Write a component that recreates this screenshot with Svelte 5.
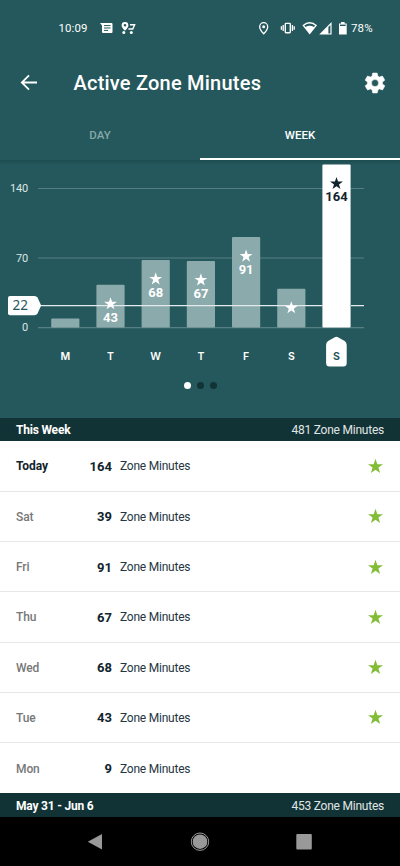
<script>
  const star = 'M0-6.3 1.5-1.9H6.2L2.4.9 3.8 5.4 0 2.7-3.8 5.4-2.4.9-6.2-1.9H-1.5Z'

  const days = [
    { label: 'M', value: 9 },
    { label: 'T', value: 43, goal: true, count: true },
    { label: 'W', value: 68, goal: true, count: true },
    { label: 'T', value: 67, goal: true, count: true },
    { label: 'F', value: 91, goal: true, count: true },
    { label: 'S', value: 39, goal: true },
    { label: 'S', value: 164, goal: true, count: true, today: true },
  ]

  const rows = [
    { day: 'Today', value: 164 },
    { day: 'Sat', value: 39 },
    { day: 'Fri', value: 91 },
    { day: 'Thu', value: 67 },
    { day: 'Wed', value: 68 },
    { day: 'Tue', value: 43 },
    { day: 'Mon', value: 9 },
  ]

  const goal = 22
  const base = 167.5
  const y = (v) => base - v * 0.994
  const x = (i) => 65.3 + i * 45.2
</script>

<div class="screen">
  <div class="status">
    <span class="clock">10:09</span>
    <svg class="status-icons" width="300" height="20" viewBox="100 18 300 20" fill="#fff">
      <path d="M100 23H111.5Q112.5 23 112.5 24V32Q112.5 33 111.5 33H103Q102 33 102 32V25.5Z" />
      <path d="M104 25.6H110.5M104 28H110.5M104 30.4H108" stroke="#25585c" stroke-width="1" />
      <path fill-rule="evenodd" d="M125 22A3.4 3.4 0 0 0 121.6 25.4C121.6 27.5 125 30.6 125 30.6S128.4 27.5 128.4 25.4A3.4 3.4 0 0 0 125 22ZM125 24A1.3 1.3 0 1 1 125 26.6A1.3 1.3 0 0 1 125 24Z" />
      <circle cx="123.8" cy="32.4" r="1.5" />
      <circle cx="131.3" cy="32.4" r="1.5" />
      <path d="M130 24.8H134.6L132.8 29H128.4" fill="none" stroke="#fff" stroke-width="1.4" />
      <path d="M263.7 22.7A4 4 0 0 0 259.7 26.7C259.7 29.7 263.7 33.8 263.7 33.8S267.7 29.7 267.7 26.7A4 4 0 0 0 263.7 22.7Z" fill="none" stroke="#fff" stroke-width="1.3" />
      <circle cx="263.7" cy="26.7" r="1.5" />
      <rect x="285.3" y="23.4" width="5" height="9.4" rx=".7" fill="none" stroke="#fff" stroke-width="1.4" />
      <path d="M283.2 25V31M281.4 26.3V29.8M292.4 25V31M294.2 26.3V29.8" stroke="#fff" stroke-width="1.3" />
      <path d="M302.4 25.3Q309.7 18.9 317 25.3L309.7 34.4Z" />
      <path d="M304.3 25.6Q309.7 21.4 315.1 25.6L314 27Q309.7 24.6 305.4 27Z" fill="#25585c" />
      <path fill-rule="evenodd" d="M331.6 22V34.5H319.2ZM330.4 25 328.4 27V33.4H330.4Z" />
      <path d="M341 22H344.6V23.4H346.7V34.5H339V23.4H341Z" />
      <path d="M340 24.6H345.7V26H340Z" fill="#25585c" />
      <text class="battery" x="351" y="32.2">78%</text>
    </svg>
  </div>

  <header>
    <svg width="18" height="18" viewBox="0 0 18 18" fill="none" stroke="#fff" stroke-width="1.8">
      <path d="M17 8.500H2M9 1.300 1.800 8.500 9 15.700" />
    </svg>
    <h1>Active Zone Minutes</h1>
    <svg width="24" height="24" viewBox="0 0 24 24" fill="#fff">
      <path d="M19.4 13c0-.3.1-.6.1-1s0-.7-.1-1l2.1-1.6c.2-.2.3-.4.1-.7l-2-3.4c-.1-.2-.4-.3-.6-.2l-2.5 1c-.5-.4-1.1-.7-1.7-1l-.4-2.6c0-.3-.2-.5-.4-.5h-4c-.3 0-.5.2-.5.4l-.4 2.7c-.6.2-1.1.6-1.7 1l-2.5-1c-.2-.1-.5 0-.6.2l-2 3.4c-.1.2-.1.5.1.7l2.1 1.6c0 .3-.1.7-.1 1s0 .7.1 1l-2.1 1.6c-.2.2-.2.5-.1.7l2 3.4c.1.2.4.3.6.2l2.5-1c.5.4 1.1.7 1.7 1l.4 2.6c0 .3.2.5.5.5h4c.2 0 .5-.2.5-.4l.4-2.700c.6-.2 1.1-.6 1.7-1l2.5 1c.2.1.5 0 .6-.2l2-3.4c.1-.2.1-.5-.1-.7ZM12 15.500a3.500 3.500 0 1 1 0-7 3.500 3.500 0 0 1 0 7Z" fill-rule="evenodd" stroke="#fff" stroke-width=".5" />
    </svg>
  </header>

  <nav class="tabs">
    <button>DAY</button>
    <button class="active">WEEK</button>
  </nav>

  <section class="chart">
    <svg width="400" height="212" viewBox="0 0 400 212">
      {#each [140, 70, 0] as tick}
        <path class="grid" d="M38 {y(tick) + 0.1}H364" />
        <text class="tick" x="28" y={y(tick) + 3.6} text-anchor="end">{tick}</text>
      {/each}
      {#each days as d, i}
        <rect class="bar" class:bar-today={d.today} x={x(i) - 14.1} y={y(d.value)} width="28.2" height={base - y(d.value)} rx="1" />
      {/each}
      <path class="goal" d="M40 {y(goal)}H322.5M351 {y(goal)}H364" />
      <path d="M10 136H34.5Q36.5 136 37.5 137.5L41.2 145.6 37.5 153.5Q36.5 155.3 34.5 155.3H10Q8 155.3 8 153.3V138Q8 136 10 136Z" fill="#fff" />
      <text class="goal-label" x="20.3" y="150.4">{goal}</text>
      {#each days as d, i}
        {#if d.goal}
          <path class:dark={d.today} class="star" d={star} transform="translate({x(i)} {y(d.value) + 19}) scale(1.04)" />
        {/if}
        {#if d.count}
          <text class="count" class:dark={d.today} x={x(i)} y={y(d.value) + 37}>{d.value}</text>
        {/if}
        {#if d.today}
          <path d="M334.8 177.3Q336.4 176.4 338 177.3L344.7 181Q346.7 182.3 346.7 185V203Q346.7 206.5 343.3 206.5H329.5Q326.1 206.5 326.1 203V185Q326.1 182.3 328.1 181Z" fill="#fff" />
        {/if}
        <text class="day" class:day-today={d.today} x={x(i)} y="200.3">{d.label}</text>
      {/each}
    </svg>
    <div class="dots"><i class="on"></i><i></i><i></i></div>
  </section>

  <div class="week"><b>This Week</b><span>481 Zone Minutes</span></div>
  <div class="list">
    {#each rows as row, i}
      <div class="row">
        <span class="row-day" class:row-today={i === 0}>{row.day}</span>
        <b class="row-value">{row.value}</b>
        <span class="row-unit">Zone Minutes</span>
        {#if row.value >= goal}
          <svg width="17" height="17" viewBox="-7 -7 14 14"><path d={star} fill="#83bd37" /></svg>
        {/if}
      </div>
    {/each}
  </div>
  <div class="week"><b>May 31 - Jun 6</b><span>453 Zone Minutes</span></div>

  <footer>
    <svg width="400" height="49" viewBox="0 0 400 49" fill="#999">
      <path d="M102 17V32.5L87.8 24.8Z" />
      <circle cx="200" cy="24.7" r="8.7" fill="none" stroke="#999" stroke-width="1" />
      <circle cx="200" cy="24.7" r="7.3" />
      <rect x="296.3" y="17" width="15.5" height="15.5" rx="1" />
    </svg>
  </footer>
</div>

<style>
  :global(body) { margin: 0; }
  .screen {
    width: 400px;
    height: 866px;
    display: flex;
    flex-direction: column;
    overflow: hidden;
    background: #25585c;
    color: #fff;
    font-family: Roboto, sans-serif;
  }
  svg { display: block; flex-shrink: 0; }
  .status {
    box-sizing: border-box;
    height: 56px;
    padding-top: 18px;
    display: flex;
    flex-shrink: 0;
  }
  .clock {
    box-sizing: border-box;
    width: 100px;
    padding-left: 58.5px;
    font: 400 11.4px/20px Roboto, sans-serif;
    letter-spacing: 0.15px;
  }
  .battery { font-size: 11.5px; letter-spacing: 0.1px; }
  header {
    box-sizing: border-box;
    height: 54px;
    padding: 0 13px 0 20px;
    display: flex;
    align-items: center;
    flex-shrink: 0;
  }
  h1 {
    flex: 1;
    margin: 0 0 0 35.5px;
    font-size: 20px;
    font-weight: 500;
    letter-spacing: 0.22px;
  }
  .tabs {
    display: flex;
    height: 50px;
    flex-shrink: 0;
  }
  .tabs button {
    flex: 1;
    padding: 1px 0 0;
    border: 0;
    border-bottom: 2px solid transparent;
    background: none;
    color: #86a8aa;
    font: 500 11.5px Roboto, sans-serif;
  }
  .tabs .active { color: #fff; border-color: #fff; }
  .chart {
    height: 257.5px;
    flex-shrink: 0;
    background: linear-gradient(#1d4d50, #25585c 5px);
  }
  .grid { stroke: #567f82; stroke-width: 1.1; }
  .tick { fill: #dce6e6; font-size: 11px; letter-spacing: -0.2px; }
  .bar { fill: #8aaaac; }
  .bar-today { fill: #fff; }
  .goal { stroke: #e3eaeb; stroke-width: 1.2; }
  .goal-label {
    fill: #25585c;
    font: 13.5px "Noto Sans", sans-serif;
    text-anchor: middle;
  }
  .star { fill: #fff; }
  .count {
    fill: #fff;
    font-size: 13px;
    font-weight: 700;
    text-anchor: middle;
  }
  .dark { fill: #11242d; }
  .day {
    fill: #fff;
    font: 600 10.5px Inter, sans-serif;
    text-anchor: middle;
  }
  .day-today { fill: #25585c; font-weight: 700; }
  .dots {
    display: flex;
    justify-content: center;
    gap: 6px;
    margin-top: 10px;
  }
  .dots i { width: 7px; height: 7px; border-radius: 50%; background: #123335; }
  .dots .on { background: #fff; }
  .week {
    box-sizing: border-box;
    height: 23.7px;
    padding: 1px 16px 0;
    display: flex;
    align-items: center;
    justify-content: space-between;
    flex-shrink: 0;
    background: #123335;
    font-size: 12px;
    letter-spacing: -0.23px;
  }
  .week b { letter-spacing: -0.2px; }
  .week span { color: #e0e6e7; }
  .list { background: #fff; }
  .row {
    box-sizing: border-box;
    height: 50.33px;
    padding: 1px 16px 0;
    display: flex;
    align-items: center;
    border-bottom: 1px solid #e7e7e7;
    color: #11242d;
    font-size: 12px;
    letter-spacing: -0.23px;
  }
  .row:last-child { border-bottom: 0; }
  .row-day { width: 46px; font-weight: 500; color: #777; letter-spacing: -0.1px; }
  .row-today { color: #11242d; font-weight: 700; }
  .row-value {
    width: 50px;
    font-size: 13px;
    letter-spacing: 0;
    text-align: right;
  }
  .row-unit { flex: 1; margin-left: 8px; color: #26363f; }
  footer { height: 50px; flex-shrink: 0; background: #000; }
</style>
